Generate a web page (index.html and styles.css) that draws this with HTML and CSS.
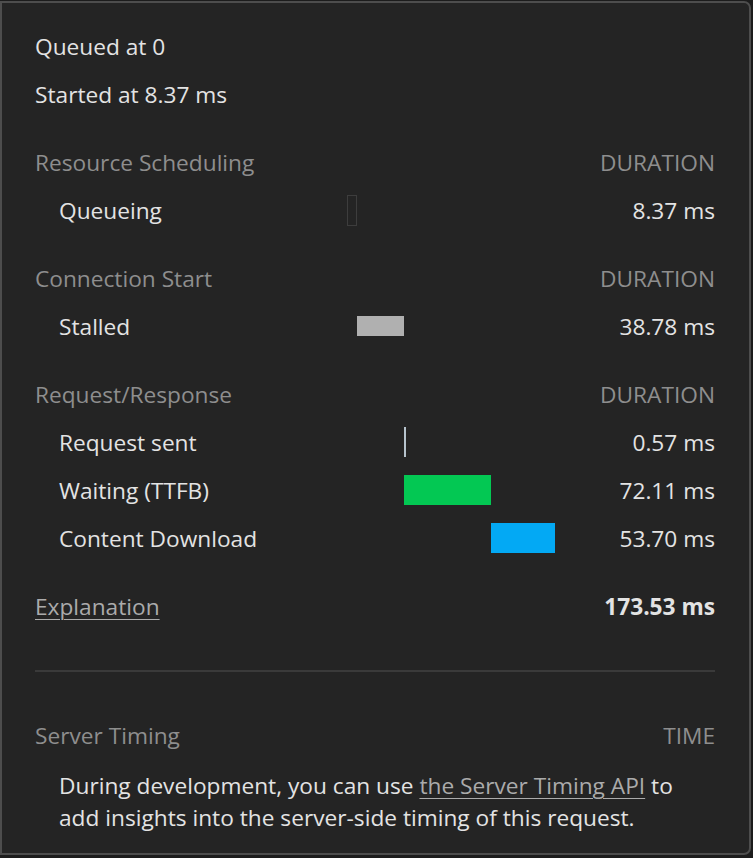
FILE: index.html
```html
<!DOCTYPE html>
<html>
<head>
<meta charset="utf-8">
<link rel="stylesheet" href="styles.css">
</head>
<body>
<div class="popover">
  <div class="info-row">Queued at 0</div>
  <div class="info-row">Started at 8.37 ms</div>

  <div class="grid">
    <div class="row header first">
      <div class="label">Resource Scheduling</div>
      <div class="timeline"></div>
      <div class="dur">DURATION</div>
    </div>
    <div class="row">
      <div class="label indent">Queueing</div>
      <div class="timeline"><div class="bar queueing" style="margin-left:0px;width:10px"></div></div>
      <div class="dur">8.37 ms</div>
    </div>

    <div class="row header">
      <div class="label">Connection Start</div>
      <div class="timeline"></div>
      <div class="dur">DURATION</div>
    </div>
    <div class="row">
      <div class="label indent">Stalled</div>
      <div class="timeline"><div class="bar stalled" style="margin-left:10px;width:47px"></div></div>
      <div class="dur">38.78 ms</div>
    </div>

    <div class="row header">
      <div class="label">Request/Response</div>
      <div class="timeline"></div>
      <div class="dur">DURATION</div>
    </div>
    <div class="row">
      <div class="label indent">Request sent</div>
      <div class="timeline"><div class="bar sent" style="margin-left:57px;width:2px"></div></div>
      <div class="dur">0.57 ms</div>
    </div>
    <div class="row">
      <div class="label indent">Waiting (TTFB)</div>
      <div class="timeline"><div class="bar waiting" style="margin-left:57px;width:87px"></div></div>
      <div class="dur">72.11 ms</div>
    </div>
    <div class="row">
      <div class="label indent">Content Download</div>
      <div class="timeline"><div class="bar download" style="margin-left:144px;width:64px"></div></div>
      <div class="dur">53.70 ms</div>
    </div>

    <div class="row total">
      <div class="label"><a class="link-grey" href="#">Explanation</a></div>
      <div class="timeline"></div>
      <div class="dur bold">173.53 ms</div>
    </div>
  </div>

  <hr class="sep">

  <div class="row header server">
    <div class="label">Server Timing</div>
    <div class="dur">TIME</div>
  </div>
  <p class="note">During development, you can use <a class="link-grey" href="#">the Server Timing API</a> to add insights into the server-side timing of this request.</p>
</div>
</body>
</html>
```

FILE: styles.css
```css
html, body {
  margin: 0;
  padding: 0;
  background: #1c1c1c;
  height: 858px;
  overflow: hidden;
}

body {
  font-family: "Open Sans", "Noto Sans", sans-serif;
  font-size: 22.7px;
  color: #e3e3e3;
}

.popover {
  box-sizing: border-box;
  margin-top: 1px;
  width: 751px;
  height: 854px;
  background: #242424;
  border: 2px solid #4d4d4d;
  border-radius: 0 7px 7px 0;
  padding: 20px 34px 0 33px;
}

.info-row {
  height: 48px;
  line-height: 48px;
  white-space: nowrap;
}

.row {
  display: grid;
  grid-template-columns: 312px 209px 1fr;
  align-items: center;
  height: 48px;
}

.row.header {
  margin-top: 20px;
  color: #8e8e8e;
}

.row.header.first {
  margin-top: 19px;
}

.row.total {
  margin-top: 20px;
}

.label {
  white-space: nowrap;
}

.indent {
  padding-left: 24px;
}

.timeline {
  display: flex;
  align-items: center;
  height: 100%;
}

.dur {
  text-align: right;
  white-space: nowrap;
}

.bold {
  font-weight: 700;
}

.bar {
  flex: none;
  height: 30px;
  box-sizing: border-box;
}

.bar.queueing {
  border: 1px solid #3d3d3d;
  height: 31px;
}

.bar.stalled {
  background: #b0b0b0;
  height: 20px;
}

.bar.sent {
  background: #b6c3cc;
}

.bar.waiting {
  background: #03c853;
}

.bar.download {
  background: #03a9f4;
}

.link-grey {
  color: #ababab;
  text-decoration: underline;
  text-decoration-thickness: 1px;
  text-underline-offset: 4px;
}

.sep {
  border: 0;
  height: 2px;
  background: #3a3a3a;
  margin: 40px 0 0 0;
}

.row.server {
  grid-template-columns: 1fr auto;
  margin-top: 39px;
}

.note {
  margin: 11px 0 0 24px;
  line-height: 32px;
}
```
